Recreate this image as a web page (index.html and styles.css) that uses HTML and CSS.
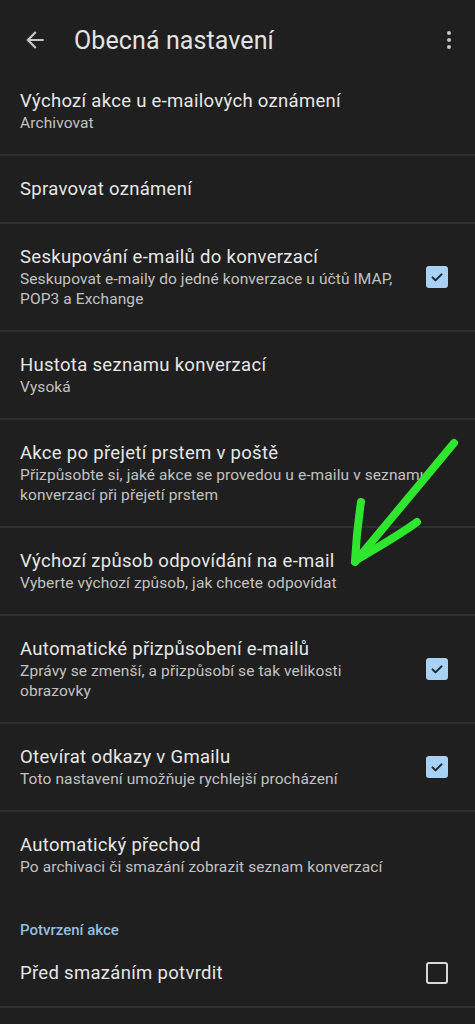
FILE: index.html
```html
<!DOCTYPE html>
<html lang="cs">
<head>
	<meta charset="UTF-8">
	<title>Obecná nastavení</title>
	<link rel="stylesheet" href="styles.css">
</head>
<body>
	<div class="screen">
		<header class="topbar">
			<svg class="icon back" viewBox="0 0 24 24"><path d="M20 11H7.83l5.59-5.59L12 4l-8 8 8 8 1.41-1.41L7.83 13H20v-2z"/></svg>
			<h1>Obecná nastavení</h1>
			<svg class="icon more" viewBox="0 0 24 24"><circle cx="12" cy="5" r="2"/><circle cx="12" cy="12" r="2"/><circle cx="12" cy="19" r="2"/></svg>
		</header>

		<ul class="prefs">
			<li class="pref">
				<div class="text">
					<div class="title">Výchozí akce u e-mailových oznámení</div>
					<div class="summary">Archivovat</div>
				</div>
			</li>
			<li class="pref">
				<div class="text">
					<div class="title">Spravovat oznámení</div>
				</div>
			</li>
			<li class="pref">
				<div class="text">
					<div class="title">Seskupování e-mailů do konverzací</div>
					<div class="summary">Seskupovat e-maily do jedné konverzace u účtů IMAP, POP3 a Exchange</div>
				</div>
				<span class="check on"><svg viewBox="0 0 24 24"><path d="M6 12.5l4 4 8-8"/></svg></span>
			</li>
			<li class="pref">
				<div class="text">
					<div class="title">Hustota seznamu konverzací</div>
					<div class="summary">Vysoká</div>
				</div>
			</li>
			<li class="pref">
				<div class="text">
					<div class="title">Akce po přejetí prstem v poště</div>
					<div class="summary">Přizpůsobte si, jaké akce se provedou u e-mailu v seznamu konverzací při přejetí prstem</div>
				</div>
			</li>
			<li class="pref">
				<div class="text">
					<div class="title">Výchozí způsob odpovídání na e-mail</div>
					<div class="summary">Vyberte výchozí způsob, jak chcete odpovídat</div>
				</div>
			</li>
			<li class="pref">
				<div class="text">
					<div class="title">Automatické přizpůsobení e-mailů</div>
					<div class="summary">Zprávy se zmenší, a přizpůsobí se tak velikosti obrazovky</div>
				</div>
				<span class="check on"><svg viewBox="0 0 24 24"><path d="M6 12.5l4 4 8-8"/></svg></span>
			</li>
			<li class="pref">
				<div class="text">
					<div class="title">Otevírat odkazy v Gmailu</div>
					<div class="summary">Toto nastavení umožňuje rychlejší procházení</div>
				</div>
				<span class="check on"><svg viewBox="0 0 24 24"><path d="M6 12.5l4 4 8-8"/></svg></span>
			</li>
			<li class="pref last">
				<div class="text">
					<div class="title">Automatický přechod</div>
					<div class="summary">Po archivaci či smazání zobrazit seznam konverzací</div>
				</div>
			</li>
			<li class="category">Potvrzení akce</li>
			<li class="pref">
				<div class="text">
					<div class="title">Před smazáním potvrdit</div>
				</div>
				<span class="check"></span>
			</li>
		</ul>

		<!-- hand-drawn marker arrow on top of the list -->
		<svg class="scribble" viewBox="0 0 475 1024">
			<path d="M454 443 C425 478 390 520 355 562"/>
			<path d="M361 502 C358 522 356 542 355 561 C376 548 398 536 417 522"/>
		</svg>
	</div>
</body>
</html>
```

FILE: styles.css
```css
html, body {
	margin: 0;
	padding: 0;
	background: #1f1f1f;
}
body {
	font-family: Roboto, "Noto Sans", sans-serif;
	color: #e3e3e3;
}
.screen {
	position: relative;
	width: 475px;
	min-height: 1024px;
	overflow: hidden;
}
.topbar {
	display: flex;
	align-items: center;
	height: 56px;
	padding: 12px 14px 0 22px;
}
.topbar h1 {
	flex: 1;
	margin: 0 0 0 26px;
	font-size: 25px;
	font-weight: 400;
	letter-spacing: 0.1px;
	color: #e3e3e3;
}
.icon {
	fill: #c4c7c5;
}
.back {
	width: 26px;
	height: 26px;
}
.more {
	width: 24px;
	height: 24px;
}
.prefs {
	list-style: none;
	margin: 0;
	padding: 0;
}
.pref {
	display: flex;
	align-items: center;
	padding: 21px 27px 21px 20px;
	border-bottom: 2px solid #2e2e2e;
}
.pref.last {
	border-bottom: 0;
}
.pref .text {
	flex: 1;
}
.title {
	font-size: 18.5px;
	line-height: 24px;
	letter-spacing: 0.3px;
	color: #e6e6e6;
}
.summary {
	font-size: 15.5px;
	line-height: 20px;
	letter-spacing: 0.1px;
	color: #c2c2c2;
	padding-right: 14px;
}
.category {
	padding: 22px 20px 0;
	font-size: 15px;
	font-weight: 500;
	line-height: 20px;
	color: #95bedf;
}
.check {
	flex: none;
	box-sizing: border-box;
	width: 22px;
	height: 22px;
	border: 2px solid #d8d8d8;
	border-radius: 3px;
}
.check.on {
	background: #a8d1f3;
	border-color: #a8d1f3;
}
.check svg {
	display: block;
	width: 18px;
	height: 18px;
	fill: none;
	stroke: #1b2a36;
	stroke-width: 2.8;
	stroke-linecap: round;
	stroke-linejoin: round;
}
.scribble {
	position: absolute;
	top: 0;
	left: 0;
	width: 475px;
	height: 1024px;
	pointer-events: none;
}
.scribble path {
	fill: none;
	stroke: #2fe62f;
	stroke-width: 8;
	stroke-linecap: round;
	stroke-linejoin: round;
}
```
